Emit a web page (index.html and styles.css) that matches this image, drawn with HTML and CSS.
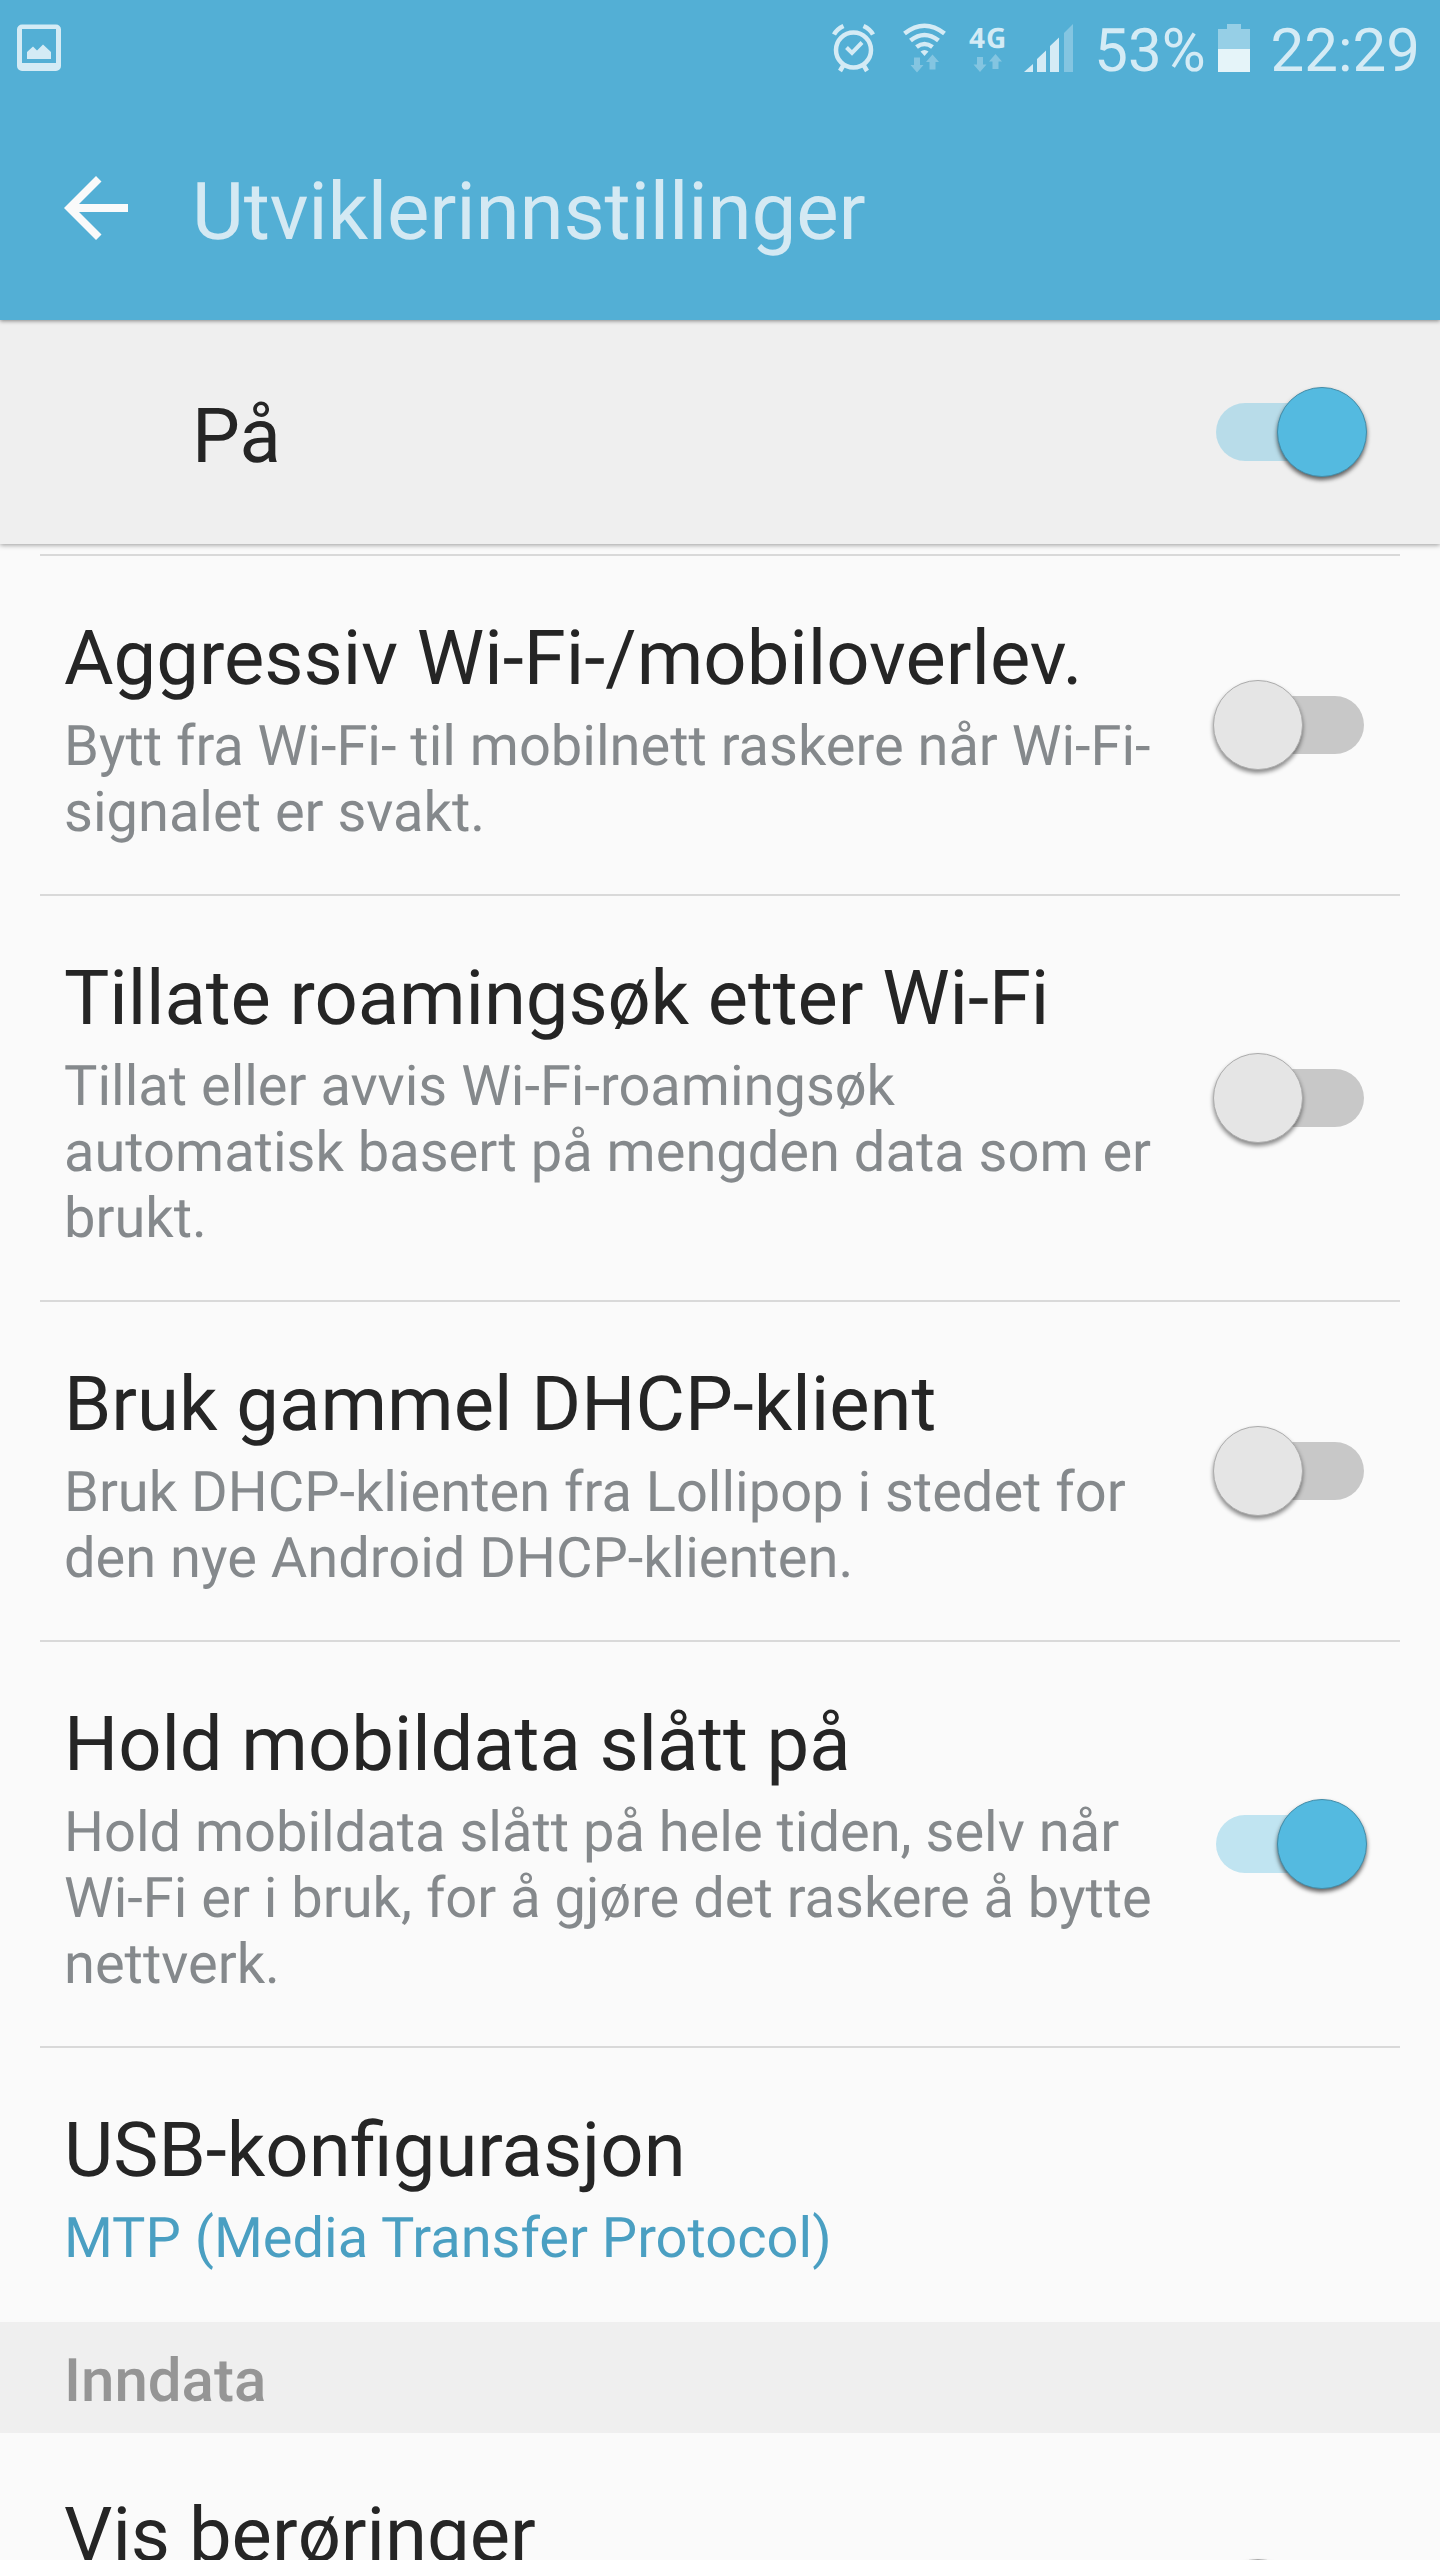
FILE: index.html
```html
<!DOCTYPE html>
<html lang="nb">
<head>
<meta charset="utf-8">
<title>Utviklerinnstillinger</title>
<link rel="stylesheet" href="styles.css">
</head>
<body>
<div class="screen">
  <header class="header">
    <div class="status">
      <svg class="ic-image" width="44" height="48" viewBox="0 0 44 48"><path fill-rule="evenodd" d="M5 .5H39a5 5 0 0 1 5 5V42a5 5 0 0 1-5 5H5a5 5 0 0 1-5-5V5.500a5 5 0 0 1 5-5ZM5 5V39H39V5Z"/><path d="M10 35V28L16 22.500L20 26.500L26 20.500L34 28V35Z"/></svg>
      <svg class="ic-alarm" width="44" height="50" viewBox="0 0 44 50"><g fill="none" stroke="currentColor"><circle cx="21.500" cy="26" r="17.500" stroke-width="4.500"/><path d="M14.500 23.500L20 29L30 18.500" stroke-width="4"/><path d="M2 10.500Q5 5 11.500 2M41 10.500Q38 5 31.500 2" stroke-width="4.500"/><path d="M11.500 41L8 47M31.500 41L35 47" stroke-width="4.500"/></g></svg>
      <svg class="ic-wifi" width="44" height="50" viewBox="0 0 44 50"><g fill="none" stroke="currentColor" stroke-width="4.600"><path d="M1.500 10.500Q21.500-5 41.500 10.500"/><path d="M7.500 17.500Q21.500 6.500 35.500 17.500"/><path d="M13.500 24Q21.500 18 29.500 24"/></g><path d="M17.500 28.500Q21.500 25.500 25.500 28.500L21.500 33Z"/><path class="dim" d="M11 34.500H17V42H20.500L14 49.500L7.500 42H11ZM26.500 46.500V39H23L29.500 31.500L36 39H32.500V46.500Z"/></svg>
      <div class="network"><span class="network-label">4G</span><svg width="30" height="18" viewBox="0 0 30 18"><path class="dim" d="M4 3H10V10.500H13.500L7 18L.5 10.500H4ZM19.500 15V7.500H16L22.500 0L29 7.500H25.500V15Z"/></svg></div>
      <svg class="ic-signal" width="50" height="48" viewBox="0 0 50 48"><path d="M0 48L9 40V48ZM13 35L22 26.500V48H13ZM26 22L35 13.500V48H26Z"/><path class="dim" d="M40 9L49 0V48H40Z"/></svg>
      <span class="percent">53%</span>
      <svg class="ic-battery" width="32" height="48" viewBox="0 0 32 48"><path opacity=".52" d="M9 0H23V5H32V25H0V5H9Z"/><path fill="#e5f4f9" d="M0 25H32V48H0Z"/></svg>
      <span class="clock">22:29</span>
    </div>
    <div class="toolbar">
      <svg class="back" width="64" height="64" viewBox="0 0 64 64"><path d="M64 28V36H15L37.500 58.500L32 64L0 32L32 0L37.500 5.500L15 28Z"/></svg>
      <h1 class="heading">Utviklerinnstillinger</h1>
    </div>
  </header>

  <div class="master">
    <span class="master-label">På</span>
    <span class="switch on"><span class="thumb"></span></span>
  </div>

  <main class="list">
    <div class="rule"></div>
    <section class="row">
      <div class="text"><h2>Aggressiv Wi-Fi-/mobiloverlev.</h2><p>Bytt fra Wi-Fi- til mobilnett raskere når Wi-Fi-<br>signalet er svakt.</p></div>
      <span class="switch"><span class="thumb"></span></span>
    </section>
    <div class="rule"></div>
    <section class="row">
      <div class="text"><h2 class="tight">Tillate roamingsøk etter Wi-Fi</h2><p>Tillat eller avvis Wi-Fi-roamingsøk<br>automatisk basert på mengden data som er<br>brukt.</p></div>
      <span class="switch"><span class="thumb"></span></span>
    </section>
    <div class="rule"></div>
    <section class="row">
      <div class="text"><h2>Bruk gammel DHCP-klient</h2><p>Bruk DHCP-klienten fra Lollipop i stedet for<br>den nye Android DHCP-klienten.</p></div>
      <span class="switch"><span class="thumb"></span></span>
    </section>
    <div class="rule"></div>
    <section class="row">
      <div class="text"><h2 class="tight">Hold mobildata slått på</h2><p>Hold mobildata slått på hele tiden, selv når<br>Wi-Fi er i bruk, for å gjøre det raskere å bytte<br>nettverk.</p></div>
      <span class="switch on"><span class="thumb"></span></span>
    </section>
    <div class="rule"></div>
    <section class="row last">
      <div class="text"><h2>USB-konfigurasjon</h2><p class="value">MTP (Media Transfer Protocol)</p></div>
    </section>
    <h3 class="category">Inndata</h3>
    <section class="row clipped">
      <div class="text"><h2>Vis berøringer</h2></div>
      <span class="switch"><span class="thumb"></span></span>
    </section>
  </main>
</div>
</body>
</html>
```

FILE: styles.css
```css
* { box-sizing: border-box; margin: 0; padding: 0; }
html, body { height: 2560px; overflow: hidden; }
body { background: #fafafa; font-family: Roboto, sans-serif; font-weight: 400; text-rendering: geometricPrecision; }
h1, h2 { font-weight: 400; }
svg { display: block; flex: none; fill: currentColor; overflow: visible; }
.screen { display: flex; flex-direction: column; width: 1440px; height: 2560px; overflow: hidden; }

.header { position: relative; z-index: 2; flex: none; height: 320px; background: #53afd5; color: #d4ebf5; box-shadow: 0 1px 4px rgba(0, 0, 0, .45); }
.status { display: flex; align-items: flex-start; height: 96px; padding: 24px 20px 0 17px; }
.ic-alarm { margin-left: auto; }
.ic-wifi { margin-left: 27px; margin-top: -1px; }
.dim { opacity: .38; }
.network { display: flex; flex-direction: column; align-items: center; width: 40px; margin-left: 21px; }
.network-label { height: 30px; font: 700 28px/28px "Open Sans", sans-serif; letter-spacing: 1px; }
.ic-signal { margin-left: 16px; }
.percent, .clock { height: 70px; margin-top: -8px; font-size: 60px; line-height: 70px; }
.percent { margin-left: 20px; }
.ic-battery { margin-left: 12px; }
.clock { margin-left: 21px; }

.toolbar { display: flex; align-items: center; gap: 64px; height: 224px; padding: 0 64px; }
.back { color: #fafafa; }
.heading { padding-top: 8px; color: #d4e9f3; font-size: 80px; line-height: 94px; letter-spacing: -.2px; }

.master { position: relative; z-index: 1; display: flex; align-items: center; justify-content: space-between; flex: none; height: 224px; padding: 0 72px 0 192px; background: #efefef; box-shadow: 0 1px 5px rgba(0, 0, 0, .4); }
.master-label { padding-top: 8px; color: #252525; font-size: 76px; line-height: 90px; }

.list { flex: none; padding-top: 10px; }
.rule { height: 2px; margin: 0 40px; background: #d9d9d9; }
.row { display: flex; align-items: center; justify-content: space-between; padding: 0 72px 0 64px; }
.text { padding: 57px 0 49px; }
.row h2 { color: #252525; font-size: 76px; line-height: 90px; white-space: nowrap; }
.row h2.tight { letter-spacing: -.08px; }
.row p { margin-top: 10px; color: #85898c; font-size: 56px; line-height: 66px; white-space: nowrap; }
.row p.value { color: #4a9fc2; }
.row.last .text { padding-bottom: 51px; }
.row.clipped { align-items: flex-start; height: 340px; }
.clipped .switch { margin-top: 142px; }
.category { height: 111px; padding-left: 64px; background: #efefef; color: #959595; font-size: 60px; font-weight: 500; line-height: 117px; }

.switch { position: relative; flex: none; width: 154px; height: 58px; }
.switch::before { content: ""; display: block; width: 148px; height: 58px; margin-left: 2px; border-radius: 29px; background: #c8c8c8; }
.switch.on::before { background: rgba(84, 187, 224, .35); }
.thumb { position: absolute; top: -16px; left: -1px; width: 90px; height: 90px; border: 1px solid #acacac; border-radius: 50%; background: #e5e5e5; box-shadow: 0 3px 4px rgba(0, 0, 0, .45); }
.on .thumb { left: 63px; border-color: #438da9; background: #54bae0; box-shadow: 0 3px 4px rgba(0, 0, 0, .6); }
```
